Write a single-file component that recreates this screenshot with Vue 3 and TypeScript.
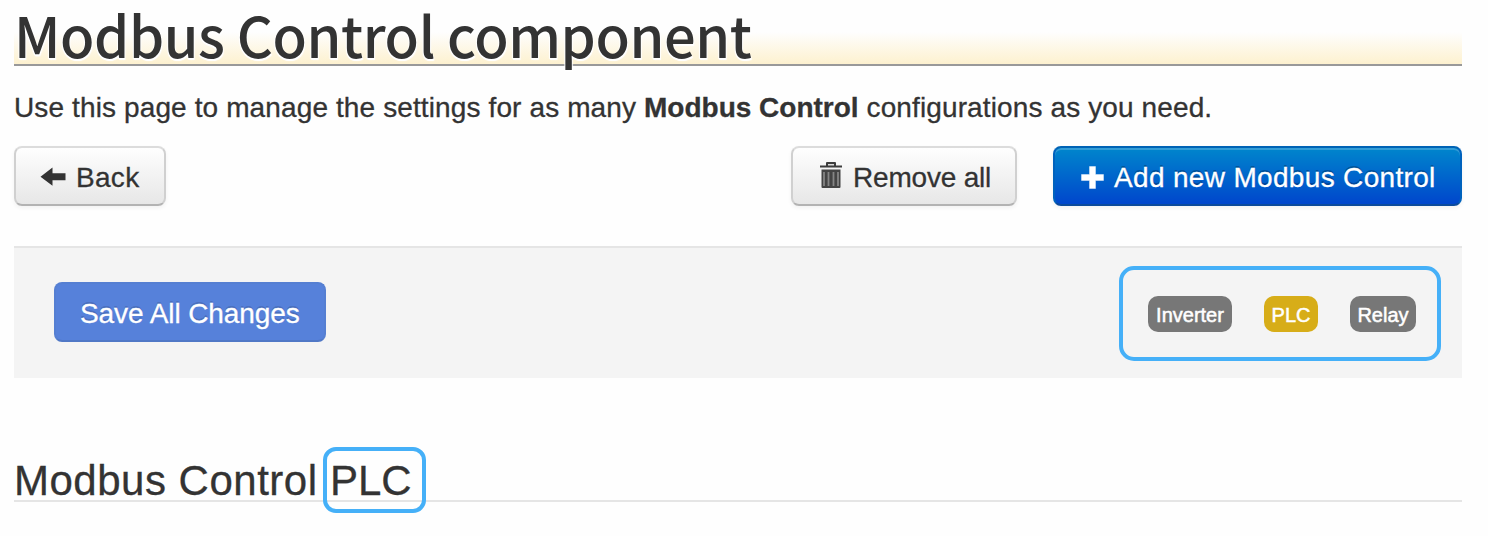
<script setup lang="ts">
interface Tab {
  name: string
  active: boolean
}
const tabs: Tab[] = [
  { name: 'Inverter', active: false },
  { name: 'PLC', active: true },
  { name: 'Relay', active: false },
]
</script>

<template>
  <main class="page">
    <h1 class="title">Modbus Control component</h1>
    <p class="intro">Use this page to manage the settings for as many <strong>Modbus Control</strong> configurations as you need.</p>

    <div class="toolbar">
      <button class="btn back">
        <svg class="icon" width="28" height="28" viewBox="0 0 28 28">
          <path d="M.5 12.700 12.500 3.500v5.700h13v7H12.500v5.500z" fill="#333" />
        </svg>
        <span>Back</span>
      </button>
      <div class="actions">
        <button class="btn remove">
          <svg class="icon" width="28" height="28" viewBox="0 0 28 28">
            <path d="M10 0h8q1 0 1 1v2.500h6v2H3v-2h6V1q0-1 1-1z" fill="#3d3d3d" />
            <path d="M11 2h6v1.500h-6z" fill="#ddd" />
            <path d="M4.500 7.500h19V25q0 1-1 1h-17q-1 0-1-1z" fill="#444" />
            <path d="M7 10v14M11.500 10v14M16.500 10v14M21 10v14" stroke="#858585" stroke-width="1.800" />
          </svg>
          <span>Remove all</span>
        </button>
        <button class="btn primary">
          <svg class="icon" width="28" height="28" viewBox="0 0 28 28">
            <path d="M10.500 2.500h6v8h8v6h-8v8h-6v-8h-8v-6h8z" fill="#fff" stroke="#fff" stroke-opacity=".4" />
          </svg>
          <span>Add new Modbus Control</span>
        </button>
      </div>
    </div>

    <section class="panel">
      <button class="btn save"><span>Save All Changes</span></button>
      <nav class="tabs">
        <span v-for="tab in tabs" :key="tab.name" class="tab" :class="[tab.name.toLowerCase(), { active: tab.active }]"><b>{{ tab.name }}</b></span>
      </nav>
    </section>

    <h2 class="section-title">
      <span class="label">Modbus Control</span>
      <span class="current"><span>PLC</span></span>
    </h2>
  </main>
</template>

<style>
body { background: #fefefe; }
</style>

<style scoped>
.page {
  box-sizing: border-box;
  width: 1488px;
  height: 536px;
  padding: 0 26px 0 14px;
  color: #333;
  font: 28px/40px "Liberation Sans", Arial, sans-serif;
  white-space: nowrap;
  -webkit-text-stroke: .3px currentColor;
}
.title {
  box-sizing: border-box;
  height: 66px;
  margin: 0;
  border-bottom: 2px solid #999;
  background: linear-gradient(#fefefe 50%, #fdf1cf);
  font: 500 56px/67px "Noto Sans CJK SC", sans-serif;
  letter-spacing: -.42px;
  text-shadow: 0 2px 0 #fff, 1px 2px 1px #fff, -1px 1px 1px #fff;
  -webkit-text-stroke: 0;
}
.intro { margin: 22px 0 18px; height: 40px; letter-spacing: .12px; }
.intro strong { letter-spacing: 0; }
.toolbar { display: flex; justify-content: space-between; height: 60px; }
.actions { display: flex; gap: 36px; }
.btn {
  box-sizing: border-box;
  display: flex;
  align-items: center;
  height: 60px;
  margin: 0;
  padding: 3px 24px 0;
  border: 2px solid #ccc;
  border-color: #dcdcdc #d0d0d0 #b3b3b3;
  border-radius: 8px;
  background: linear-gradient(#fff, #e6e6e6);
  background-origin: border-box;
  box-shadow: inset 0 2px 0 rgba(255, 255, 255, .2), 0 2px 4px rgba(0, 0, 0, .05);
  color: #333;
  font: inherit;
  text-shadow: 0 2px 2px rgba(255, 255, 255, .75);
}
.icon { flex: none; margin-right: 8px; }
.back { width: 152px; letter-spacing: .3px; }
.remove { width: 226px; letter-spacing: -.2px; }
.remove .icon { margin-bottom: 3px; }
.primary {
  width: 409px;
  border-color: #0063b5 #0062bd #0b4b9c;
  background: linear-gradient(#08c, #04c);
  background-origin: border-box;
  color: #fff;
  letter-spacing: .33px;
  text-shadow: 0 -2px 0 rgba(0, 0, 0, .25);
}
.primary .icon { margin-right: 7px; }
.panel {
  box-sizing: border-box;
  display: flex;
  align-items: flex-start;
  justify-content: space-between;
  height: 132px;
  margin-top: 40px;
  padding: 18px 21px 0 40px;
  border-top: 2px solid #e5e5e5;
  background: #f4f4f4;
}
.save {
  width: 272px;
  margin-top: 16px;
  border-color: #557fd2 #557fd2 #5078c6;
  background: #5681da;
  box-shadow: none;
  color: #fff;
  letter-spacing: -.08px;
  text-shadow: 0 -2px 0 rgba(0, 0, 0, .15);
}
.tabs {
  box-sizing: border-box;
  display: flex;
  width: 322px;
  height: 95px;
  padding: 26px 0 0 25px;
  border: 4px solid #45b0f8;
  border-radius: 15px;
}
.tab {
  display: flex;
  justify-content: center;
  height: 36px;
  margin-right: 32px;
  border-radius: 10px;
  background: #777;
  color: #fff;
  font-size: 20px;
  line-height: 38px;
}
.tab b { font-weight: 400; -webkit-text-stroke: .5px #fff; }
.inverter { width: 84px; }
.plc { width: 54px; }
.relay { width: 66px; margin-right: 0; }
.active { background: #d7ad18; }
.section-title {
  box-sizing: border-box;
  display: flex;
  height: 55px;
  margin: 69px 0 0;
  border-bottom: 2px solid #e5e5e5;
  font-size: 42px;
  font-weight: 400;
  line-height: 68px;
}
.label { width: 309px; letter-spacing: .5px; }
.current {
  box-sizing: border-box;
  width: 103px;
  height: 66px;
  padding-left: 3px;
  border: 4px solid #45b0f8;
  border-radius: 13px;
  line-height: 60px;
}
</style>
